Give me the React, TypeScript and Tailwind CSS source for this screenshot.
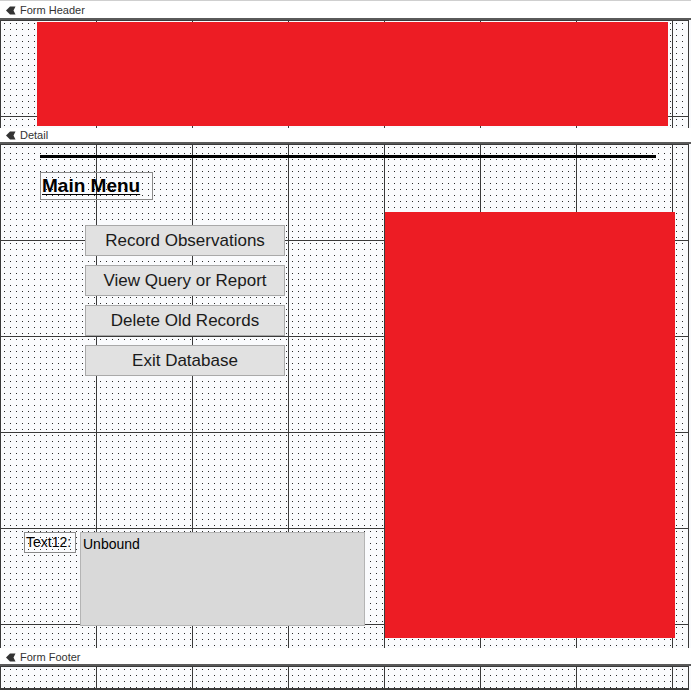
const canvas =
  "relative w-[689px] border-r border-[#3a3a3a] bg-[linear-gradient(to_right,#3a3a3a_1px,transparent_1px),linear-gradient(to_bottom,#3a3a3a_1px,transparent_1px),conic-gradient(at_1px_1px,transparent_75%,#2a2a2a_0)] bg-size-[96px_96px,96px_96px,6px_6px] bg-position-[0_0,0_0,4px_3px]";

function SectionBar({ label, h }: { label: string; h: "top" | "mid" | "foot" }) {
  const size =
    h === "top" ? "h-[20px] border-t border-t-[#cfcfcf] pt-[2px]" : h === "mid" ? "h-[16px] pt-[1px]" : "h-[18px] pt-[2px]";
  return (
    <div className={`flex items-center gap-[4px] border-b-2 border-[#5a5a5a] bg-white pl-[6px] ${size}`}>
      <svg width="10" height="9" viewBox="0 0 10 9" className="shrink-0">
        <path d="M0 4.5 L4 0.5 H9.5 L7.5 4.5 L9.5 8.5 H4 Z" fill="#333" />
      </svg>
      <span className="text-[11px] leading-none text-[#333]">{label}</span>
    </div>
  );
}

const buttons = ["Record Observations", "View Query or Report", "Delete Old Records", "Exit Database"];

export default function App() {
  return (
    <div className="h-[690px] w-[691px] overflow-hidden bg-[#fafbfd] font-['Liberation_Sans',Arial,sans-serif]">
      <SectionBar label="Form Header" h="top" />
      <div className={`${canvas} h-[108px]`}>
        <div className="absolute left-[37px] top-[2px] h-[104px] w-[631px] bg-[#ed1c24]" />
      </div>

      <SectionBar label="Detail" h="mid" />
      <div className={`${canvas} h-[504px]`}>
        <div className="absolute left-[40px] top-[11px] h-[3px] w-[616px] bg-black" />
        <div className="absolute left-[40px] top-[28px] flex h-[28px] w-[113px] items-center border border-[#8a8a8a] pl-[1px]">
          <span className="text-[19px] font-bold text-black underline underline-offset-2">Main Menu</span>
        </div>

        <div className="absolute left-[85px] top-[81px] flex w-[200px] flex-col gap-[9px]">
          {buttons.map((b) => (
            <div
              key={b}
              className="flex h-[31px] items-center justify-center border border-[#a9a9a9] bg-[#e1e1e1] text-[17px] text-[#1a1a1a]"
            >
              {b}
            </div>
          ))}
        </div>

        <div className="absolute left-[385px] top-[68px] h-[426px] w-[290px] bg-[#ed1c24]" />

        <div className="absolute left-[24px] top-[388px] flex h-[21px] w-[52px] items-center border border-[#8a8a8a] pl-[1px] text-[14px] text-black">
          Text12:
        </div>
        <div className="absolute left-[80px] top-[388px] h-[94px] w-[285px] border border-[#b4b4b4] bg-[#d9d9d9] pl-[2px] pt-[1px] text-[14px] text-black">
          Unbound
        </div>
      </div>

      <SectionBar label="Form Footer" h="foot" />
      <div className={`${canvas} h-[24px] border-b-2 border-b-[#3a3a3a]`} />
    </div>
  );
}
